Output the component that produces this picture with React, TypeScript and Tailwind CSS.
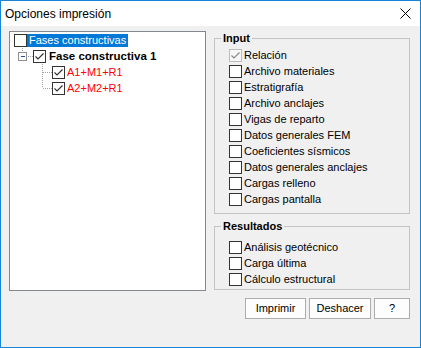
import type { ReactNode } from 'react'

const font = { fontFamily: '"Liberation Sans", Arial, sans-serif' }

function Check({ checked = false, disabled = false }: { checked?: boolean; disabled?: boolean }) {
  return (
    <span
      className={
        'flex h-[13px] w-[13px] shrink-0 items-center justify-center border ' +
        (disabled ? 'border-[#bcbcbc] bg-[#f7f7f7]' : 'border-[#333333] bg-white')
      }
    >
      {checked && (
        <svg width="11" height="11" viewBox="0 0 11 11" fill="none" aria-hidden>
          <polyline
            points="1.5,5.5 4,8 9.5,2.5"
            stroke={disabled ? '#8a8a8a' : '#333333'}
            strokeWidth="1.2"
          />
        </svg>
      )}
    </span>
  )
}

function Option({ label, checked, disabled }: { label: string; checked?: boolean; disabled?: boolean }) {
  return (
    <div className="flex h-[16px] items-center">
      <Check checked={checked} disabled={disabled} />
      <span className="ml-[2px] text-[11px] leading-[16px] text-black">{label}</span>
    </div>
  )
}

function Group({ title, className, children }: { title: string; className?: string; children: ReactNode }) {
  return (
    <fieldset className={'border border-[#c4c4c4] ' + (className ?? '')}>
      <legend className="ml-[6px] px-[2px] text-[11px] font-bold leading-[14px] text-black">{title}</legend>
      {children}
    </fieldset>
  )
}

function Button({ children, className }: { children: ReactNode; className?: string }) {
  return (
    <button
      className={
        'flex h-[21px] items-center justify-center border border-[#adadad] bg-[#fdfdfd] text-[11px] text-black ' +
        (className ?? '')
      }
    >
      {children}
    </button>
  )
}

// dotted connectors of the tree view
function Connector({ width, children }: { width: number; children: ReactNode }) {
  return (
    <svg width={width} height="16" viewBox={`0 0 ${width} 16`} fill="none" className="shrink-0" aria-hidden>
      <g stroke="#a0a0a0" strokeDasharray="1 1" shapeRendering="crispEdges">
        {children}
      </g>
    </svg>
  )
}

function Tree() {
  return (
    <div className="h-[260px] w-[197px] shrink-0 border border-[#828790] bg-white pt-[0px]">
      <div className="flex h-[16px] items-center pl-[4px]">
        <Check />
        <span className="flex h-[13px] items-center bg-[#0078d7] px-[2px] text-[11px] leading-[13px] text-white">
          Fases constructivas
        </span>
      </div>
      <div className="flex h-[16px] items-center">
        <svg width="23" height="16" viewBox="0 0 23 16" fill="none" className="shrink-0" aria-hidden>
          <g stroke="#a0a0a0" strokeDasharray="1 1" shapeRendering="crispEdges">
            <line x1="12.5" y1="0" x2="12.5" y2="4" />
            <line x1="18" y1="8.5" x2="23" y2="8.5" />
          </g>
          <rect x="8.5" y="4.5" width="8" height="8" fill="white" stroke="#919191" shapeRendering="crispEdges" />
          <line x1="10.5" y1="8.5" x2="15" y2="8.5" stroke="#2a4c9a" shapeRendering="crispEdges" />
        </svg>
        <Check checked />
        <span className="ml-[3px] text-[11.5px] font-bold leading-[16px] text-black">Fase constructiva 1</span>
      </div>
      <div className="flex h-[16px] items-center">
        <Connector width={42}>
          <line x1="32.5" y1="0" x2="32.5" y2="16" />
          <line x1="33" y1="8.5" x2="42" y2="8.5" />
        </Connector>
        <Check checked />
        <span className="ml-[2px] text-[11px] leading-[16px] text-[#ff0000]">A1+M1+R1</span>
      </div>
      <div className="flex h-[16px] items-center">
        <Connector width={42}>
          <line x1="32.5" y1="0" x2="32.5" y2="8" />
          <line x1="33" y1="8.5" x2="42" y2="8.5" />
        </Connector>
        <Check checked />
        <span className="ml-[2px] text-[11px] leading-[16px] text-[#ff0000]">A2+M2+R1</span>
      </div>
    </div>
  )
}

export default function App() {
  return (
    <div className="flex h-[348px] w-[421px] flex-col border border-[#1883d7] bg-[#f0f0f0]" style={font}>
      <div className="flex h-[25px] shrink-0 items-center justify-between bg-white pl-[4px] pr-[9px]">
        <span className="text-[12px] text-black">Opciones impresión</span>
        <svg width="11" height="11" viewBox="0 0 11 11" aria-hidden>
          <path d="M0.5 0.5 L10.5 10.5 M10.5 0.5 L0.5 10.5" stroke="#000" strokeWidth="1" />
        </svg>
      </div>
      <div className="flex gap-[8px] pl-[8px] pt-[5px]">
        <Tree />
        <div className="flex w-[196px] flex-col">
          <Group title="Input">
            <div className="pb-[6px] pl-[14px] pt-[2px]">
              <Option label="Relación" checked disabled />
              <Option label="Archivo materiales" />
              <Option label="Estratigrafía" />
              <Option label="Archivo anclajes" />
              <Option label="Vigas de reparto" />
              <Option label="Datos generales FEM" />
              <Option label="Coeficientes sísmicos" />
              <Option label="Datos generales anclajes" />
              <Option label="Cargas relleno" />
              <Option label="Cargas pantalla" />
            </div>
          </Group>
          <Group title="Resultados" className="mt-[5px]">
            <div className="pb-[2px] pl-[14px] pt-[6px]">
              <Option label="Análisis geotécnico" />
              <Option label="Carga última" />
              <Option label="Cálculo estructural" />
            </div>
          </Group>
          <div className="mt-[8px] flex justify-end gap-[3px]">
            <Button className="w-[61px]">Imprimir</Button>
            <Button className="w-[62px]">Deshacer</Button>
            <Button className="w-[36px]">?</Button>
          </div>
        </div>
      </div>
    </div>
  )
}
